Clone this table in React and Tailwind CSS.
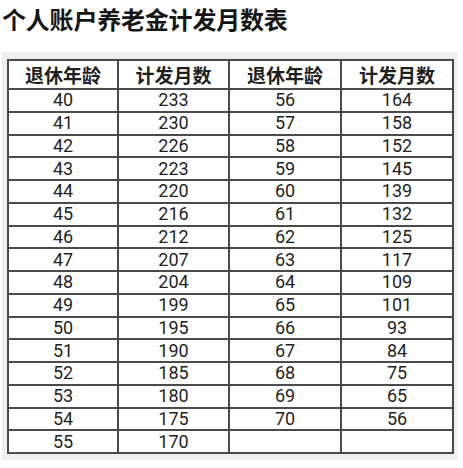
// Pension payout months table (个人账户养老金计发月数表)
import React from 'react';

const ROWS = [
  [40, 233, 56, 164],
  [41, 230, 57, 158],
  [42, 226, 58, 152],
  [43, 223, 59, 145],
  [44, 220, 60, 139],
  [45, 216, 61, 132],
  [46, 212, 62, 125],
  [47, 207, 63, 117],
  [48, 204, 64, 109],
  [49, 199, 65, 101],
  [50, 195, 66, 93],
  [51, 190, 67, 84],
  [52, 185, 68, 75],
  [53, 180, 69, 65],
  [54, 175, 70, 56],
  [55, 170, '', ''],
];

const HEAD = ['退休年龄', '计发月数', '退休年龄', '计发月数'];
const WIDTHS = ['w-[110px]', 'w-[111px]', 'w-[112px]', 'w-[112px]'];

export default function App() {
  return (
    <div className="h-[468px] w-[463px] overflow-hidden bg-white">
      <h1 className="pl-[2px] pt-[5px] text-[24px] leading-[28px] font-bold tracking-[-0.2px] text-[#151515] [font-family:'Noto_Sans_CJK_SC',sans-serif]">
        个人账户养老金计发月数表
      </h1>

      <div className="ml-[2px] mt-[19px] w-[455px] bg-[#eeeeee] pb-[6px] pl-[5px] pr-[4px] pt-[7px]">
        <table className="w-[446px] table-fixed border-collapse bg-white text-center text-[#1f1f1f]">
          <thead>
            <tr className="h-[29px]">
              {HEAD.map((h, i) => (
                <th
                  key={i}
                  className={`${WIDTHS[i]} border-2 border-[#4a4a4a] p-0 text-[19px] leading-[24px] font-bold [font-family:'Noto_Sans_CJK_SC',sans-serif]`}
                >
                  {h}
                </th>
              ))}
            </tr>
          </thead>
          <tbody>
            {ROWS.map((r, ri) => (
              <tr key={ri} className="h-[22.75px]">
                {r.map((v, ci) => (
                  <td
                    key={ci}
                    className="border-2 border-[#4a4a4a] p-0 text-[18px] leading-[20px] [font-family:Roboto,sans-serif]"
                  >
                    {v}
                  </td>
                ))}
              </tr>
            ))}
          </tbody>
        </table>
      </div>
    </div>
  );
}
